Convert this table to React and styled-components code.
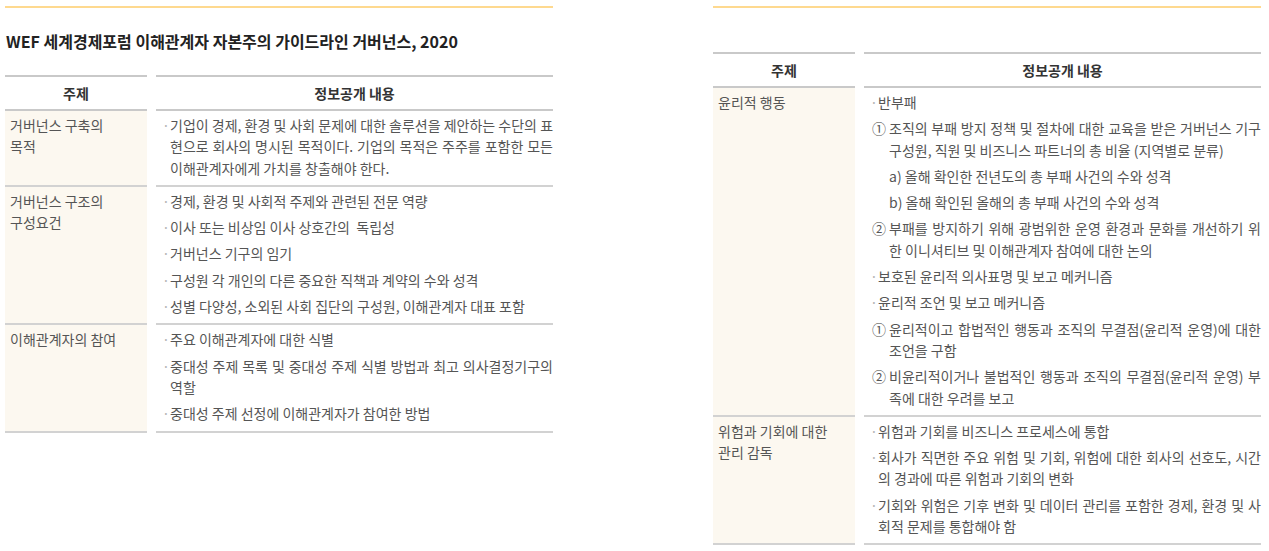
import React from "react";
import styled, { createGlobalStyle } from "styled-components";

const GlobalStyle = createGlobalStyle`
    body {
        margin: 0;
        background: #ffffff;
        font-family: "Noto Sans CJK KR", "Noto Sans", sans-serif;
    }
`;

const leftRows = [
    {
        topic: ["거버넌스 구축의", "목적"],
        items: [
            { kind: "bullet", lines: ["기업이 경제, 환경 및 사회 문제에 대한 솔루션을 제안하는 수단의 표", "현으로 회사의 명시된 목적이다. 기업의 목적은 주주를 포함한 모든", "이해관계자에게 가치를 창출해야 한다."] },
        ],
    },
    {
        topic: ["거버넌스 구조의", "구성요건"],
        items: [
            { kind: "bullet", lines: ["경제, 환경 및 사회적 주제와 관련된 전문 역량"] },
            { kind: "bullet", lines: ["이사 또는 비상임 이사 상호간의\u00a0 독립성"] },
            { kind: "bullet", lines: ["거버넌스 기구의 임기"] },
            { kind: "bullet", lines: ["구성원 각 개인의 다른 중요한 직책과 계약의 수와 성격"] },
            { kind: "bullet", lines: ["성별 다양성, 소외된 사회 집단의 구성원, 이해관계자 대표 포함"] },
        ],
    },
    {
        topic: ["이해관계자의 참여"],
        items: [
            { kind: "bullet", lines: ["주요 이해관계자에 대한 식별"] },
            { kind: "bullet", lines: ["중대성 주제 목록 및 중대성 주제 식별 방법과 최고 의사결정기구의", "역할"] },
            { kind: "bullet", lines: ["중대성 주제 선정에 이해관계자가 참여한 방법"] },
        ],
    },
];

const rightRows = [
    {
        topic: ["윤리적 행동"],
        items: [
            { kind: "bullet", lines: ["반부패"] },
            { kind: "num", mark: "①", lines: ["조직의 부패 방지 정책 및 절차에 대한 교육을 받은 거버넌스 기구", "구성원, 직원 및 비즈니스 파트너의 총 비율 (지역별로 분류)"] },
            { kind: "sub", lines: ["a) 올해 확인한 전년도의 총 부패 사건의 수와 성격"] },
            { kind: "sub", lines: ["b) 올해 확인된 올해의 총 부패 사건의 수와 성격"] },
            { kind: "num", mark: "②", lines: ["부패를 방지하기 위해 광범위한 운영 환경과 문화를 개선하기 위", "한 이니셔티브 및 이해관계자 참여에 대한 논의"] },
            { kind: "bullet", lines: ["보호된 윤리적 의사표명 및 보고 메커니즘"] },
            { kind: "bullet", lines: ["윤리적 조언 및 보고 메커니즘"] },
            { kind: "num", mark: "①", lines: ["윤리적이고 합법적인 행동과 조직의 무결점(윤리적 운영)에 대한", "조언을 구함"] },
            { kind: "num", mark: "②", lines: ["비윤리적이거나 불법적인 행동과 조직의 무결점(윤리적 운영) 부", "족에 대한 우려를 보고"] },
        ],
    },
    {
        topic: ["위험과 기회에 대한", "관리 감독"],
        items: [
            { kind: "bullet", lines: ["위험과 기회를 비즈니스 프로세스에 통합"] },
            { kind: "bullet", lines: ["회사가 직면한 주요 위험 및 기회, 위험에 대한 회사의 선호도, 시간", "의 경과에 따른 위험과 기회의 변화"] },
            { kind: "bullet", lines: ["기회와 위험은 기후 변화 및 데이터 관리를 포함한 경제, 환경 및 사", "회적 문제를 통합해야 함"] },
        ],
    },
];

function DisclosureTable({ rows, offset }) {
    return (
        <StyledTable $offset={offset}>
            <StyledHeadCell>주제</StyledHeadCell>
            <StyledHeadCell>정보공개 내용</StyledHeadCell>
            {rows.map((row, rowIndex) => (
                <React.Fragment key={rowIndex}>
                    <StyledTopicCell>
                        {row.topic.map((line, i) => (
                            <StyledLine key={i}>{line}</StyledLine>
                        ))}
                    </StyledTopicCell>
                    <StyledContentCell>
                        {row.items.map((item, itemIndex) => (
                            <StyledItem key={itemIndex}>
                                <StyledMarker $kind={item.kind}>
                                    {item.kind === "bullet" ? "·" : item.mark}
                                </StyledMarker>
                                <StyledLines>
                                    {item.lines.map((line, i) => (
                                        <StyledLine key={i} $fill={i < item.lines.length - 1}>
                                            {line}
                                        </StyledLine>
                                    ))}
                                </StyledLines>
                            </StyledItem>
                        ))}
                    </StyledContentCell>
                </React.Fragment>
            ))}
        </StyledTable>
    );
}

export default function App() {
    return (
        <>
            <GlobalStyle />
            <StyledPage>
                <StyledPanel>
                    <StyledTitle>WEF 세계경제포럼 이해관계자 자본주의 가이드라인 거버넌스, 2020</StyledTitle>
                    <DisclosureTable rows={leftRows} />
                </StyledPanel>
                <StyledPanel>
                    <DisclosureTable rows={rightRows} offset={44} />
                </StyledPanel>
            </StyledPage>
        </>
    );
}

const StyledPage = styled.main`
    display: flex;
    gap: 160px;
    padding: 6px 0 0 5px;
`;

const StyledPanel = styled.section`
    width: 548px;
    border-top: 2px solid #fed98f;
`;

const StyledTitle = styled.h2`
    margin: 23px 0 24px 1px;
    font-size: 16px;
    line-height: 20px;
    font-weight: 700;
    color: #222222;
`;

const StyledTable = styled.div`
    display: grid;
    grid-template-columns: 142px 1fr;
    column-gap: 9px;
    margin-top: ${(p) => (p.$offset ? `${p.$offset}px` : "0")};
    font-size: 14px;
    line-height: 21.3px;
    color: #555555;
`;

const StyledHeadCell = styled.div`
    border-top: 2px solid #c9c9c9;
    border-bottom: 2px solid #c9c9c9;
    height: 32px;
    line-height: 32px;
    text-align: center;
    font-weight: 700;
    color: #333333;
`;

const StyledTopicCell = styled.div`
    background: #fcf8f0;
    border-bottom: 2px solid #d2d2d2;
    padding: 4px 5px 6px;
`;

const StyledContentCell = styled.div`
    border-bottom: 2px solid #d2d2d2;
    padding: 4px 0 6px;
`;

const StyledItem = styled.div`
    display: flex;

    & + & {
        margin-top: 5px;
    }
`;

const StyledMarker = styled.span`
    flex: none;
    width: ${(p) => (p.$kind === "bullet" ? "8px" : "17px")};
    padding-left: ${(p) => (p.$kind === "bullet" ? "6px" : "8px")};
    color: ${(p) => (p.$kind === "bullet" ? "#b5b5b5" : "#555555")};
`;

const StyledLines = styled.div`
    flex: 1;
    min-width: 0;
`;

const StyledLine = styled.span`
    display: block;
    text-align: justify;
    text-align-last: ${(p) => (p.$fill ? "justify" : "auto")};
`;
